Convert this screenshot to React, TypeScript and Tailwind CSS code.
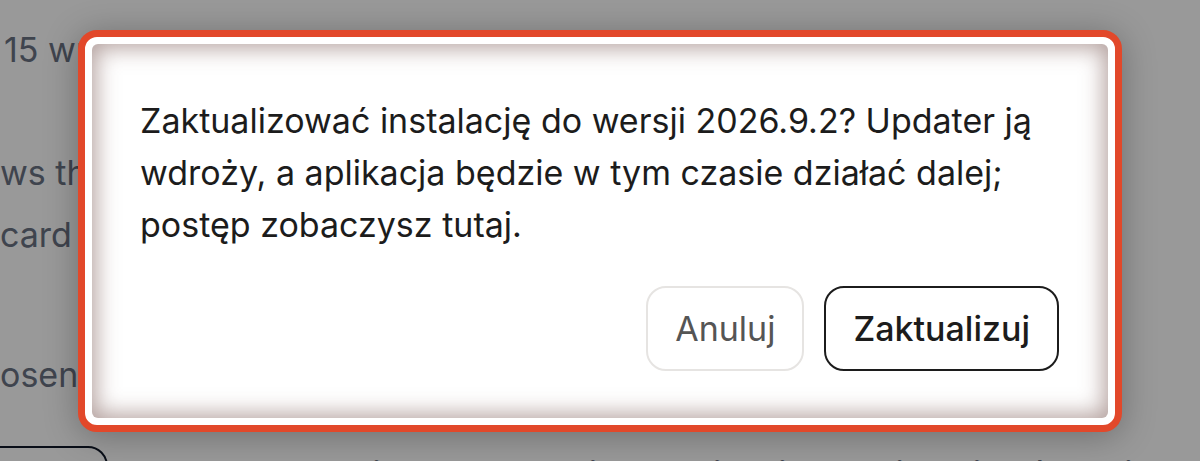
import React from 'react';

export default function App() {
  return (
    <div className="relative h-[461px] overflow-hidden bg-white font-['Inter',sans-serif]">
      {/* page behind the dialog */}
      <div className="pt-[26px] text-[34px] leading-[48px] text-gray-500">
        <div className="pl-[4px] whitespace-nowrap">15 wrz 2026 · 14:32</div>
        <div className="mt-[75px] whitespace-nowrap">ws the</div>
        <div className="mt-[14px] whitespace-nowrap">card</div>
        <div className="mt-[92px] whitespace-nowrap">osen</div>
        <div className="mt-[47px] flex items-start gap-[40px] whitespace-nowrap">
          <div className="-ml-[20px] h-[60px] w-[128px] rounded-[20px] border-2 border-gray-900" />
          <div className="pt-[4px]">Updater wdroży nową wersję, a aplikacja będzie działać dalej</div>
        </div>
      </div>

      {/* overlay + dialog */}
      <div className="absolute inset-0 flex items-center justify-center bg-black/40">
        <div className="h-[402px] w-[1044px] rounded-[19px] border-[7px] border-[#e2482a] bg-white p-[7px] shadow-[0_4px_34px_rgba(0,0,0,0.28)]">
          <div className="flex h-full flex-col rounded-[6px] bg-white pb-[47px] pl-[48px] pr-[49px] pt-[51px] shadow-[inset_0_0_22px_4px_rgba(110,72,68,0.52)]">
            <p className="text-[34px] leading-[52px] text-[#1c1c1c]">
              Zaktualizować instalację do wersji 2026.9.2? Updater ją wdroży, a aplikacja będzie w tym czasie działać dalej; postęp zobaczysz tutaj.
            </p>
            <div className="mt-auto flex justify-end gap-[20px]">
              <button className="h-[85px] rounded-[20px] border-2 border-[#e6e4e2] bg-white px-[27px] text-[34px] text-[#555555]">
                Anuluj
              </button>
              <button className="h-[85px] rounded-[20px] border-2 border-[#1c1c1c] bg-white px-[27px] text-[34px] font-medium text-[#1c1c1c]">
                Zaktualizuj
              </button>
            </div>
          </div>
        </div>
      </div>
    </div>
  );
}
